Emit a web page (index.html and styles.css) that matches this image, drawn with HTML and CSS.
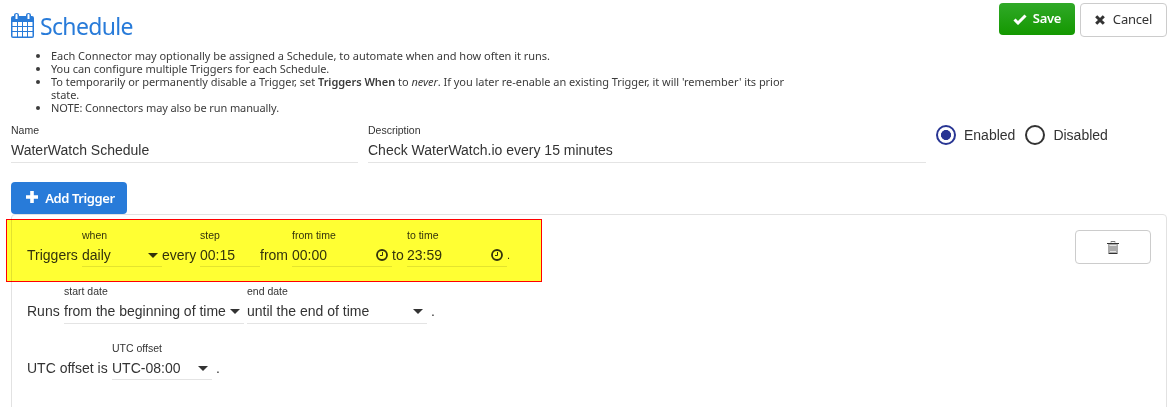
FILE: index.html
```html
<!DOCTYPE html>
<html lang="en">
<head>
<meta charset="utf-8">
<title>Schedule</title>
<link rel="stylesheet" href="styles.css">
</head>
<body>
<header class="header">
  <h1 class="title">
    <svg class="calendar" viewBox="0 0 23 25" width="23" height="25"><path fill="#287bd9" fill-rule="evenodd" d="M2 3H3V2Q3 0 5.500 0T8 2V3H15V2Q15 0 17.500 0T20 2V3H21Q23 3 23 5V23Q23 25 21 25H2Q0 25 0 23V5Q0 3 2 3ZM4.500 2V6H6.500V2Q6.500 1 5.500 1T4.500 2ZM16.500 2V6H18.500V2Q18.500 1 17.500 1T16.500 2ZM1.500 9V13H6V9ZM7 9V13H11V9ZM12 9V13H16V9ZM17 9V13H21.500V9ZM1.500 14V18H6V14ZM7 14V18H11V14ZM12 14V18H16V14ZM17 14V18H21.500V14ZM1.500 19V23.500H6V19ZM7 19V23.500H11V19ZM12 19V23.500H16V19ZM17 19V23.500H21.500V19Z"/></svg>
    <span class="title-text">Schedule</span>
  </h1>
  <div class="actions">
    <button class="btn save"><svg width="14" height="11" viewBox="0 0 14 11"><path d="M1.500 5.500 5 9 12.500 1.500" fill="none" stroke="#fff" stroke-width="3"/></svg><span>Save</span></button>
    <button class="btn cancel"><svg width="10" height="10" viewBox="0 0 10 10"><path d="M1.200 1.200 8.800 8.800M8.800 1.200 1.200 8.800" stroke="#333" stroke-width="3"/></svg><span>Cancel</span></button>
  </div>
</header>
<ul class="help">
  <li><span class="l1">Each Connector may optionally be assigned a Schedule, to automate when and how often it runs.</span></li>
  <li><span class="l2">You can configure multiple Triggers for each Schedule.</span></li>
  <li><span class="l3">To temporarily or permanently disable a Trigger, set <b>Triggers When</b> to <i>never</i>. If you later re-enable an existing Trigger, it will 'remember' its prior<br>state.</span></li>
  <li><span class="l4">NOTE: Connectors may also be run manually.</span></li>
</ul>
<section class="details">
  <label class="field name"><small>Name</small><span class="value">WaterWatch Schedule</span></label>
  <label class="field description"><small>Description</small><span class="value">Check WaterWatch.io every 15 minutes</span></label>
  <div class="radios">
    <span class="radio on"></span><span class="enabled">Enabled</span>
    <span class="radio"></span><span>Disabled</span>
  </div>
</section>
<button class="btn add"><svg width="12" height="12" viewBox="0 0 12 12"><path d="M6 0V12M0 6H12" stroke="#fff" stroke-width="3.600"/></svg><span>Add Trigger</span></button>
<section class="panel">
  <div class="highlight"></div>
  <div class="rows">
    <div class="row">
      <span class="word triggers">Triggers</span>
      <label class="field w80"><small>when</small><span class="value">daily<i class="caret"></i></span></label>
      <span class="word every">every</span>
      <label class="field w60"><small>step</small><span class="value">00:15</span></label>
      <span class="word from">from</span>
      <label class="field w100"><small>from time</small><span class="value">00:00<svg class="clock" width="12" height="12" viewBox="0 0 12 12"><circle cx="6" cy="6" r="5" fill="none" stroke="#333" stroke-width="1.800"/><path d="M6.500 3V6.500H4" fill="none" stroke="#333"/></svg></span></label>
      <span class="word to">to</span>
      <label class="field w100"><small>to time</small><span class="value">23:59<svg class="clock" width="12" height="12" viewBox="0 0 12 12"><circle cx="6" cy="6" r="5" fill="none" stroke="#333" stroke-width="1.800"/><path d="M6.500 3V6.500H4" fill="none" stroke="#333"/></svg></span></label>
      <span class="word dot1">.</span>
    </div>
    <div class="row row-runs">
      <span class="word runs">Runs</span>
      <label class="field w180"><small>start date</small><span class="value">from the beginning of time<i class="caret"></i></span></label>
      <label class="field w180 end"><small>end date</small><span class="value">until the end of time<i class="caret"></i></span></label>
      <span class="word dot2">.</span>
    </div>
    <div class="row row-utc">
      <span class="word utc">UTC offset is</span>
      <label class="field w100"><small>UTC offset</small><span class="value">UTC-08:00<i class="caret"></i></span></label>
      <span class="word dot2">.</span>
    </div>
  </div>
  <button class="btn trash"><svg width="12" height="13" viewBox="0 0 12 13"><path d="M1 3H11V12H1Z" fill="#aaa"/><path d="M4 1.500V.5H8V1.500" fill="none" stroke="#777"/><path d="M0 2.500H12M1.500 12.500H10.500" stroke="#333"/><path d="M2.500 4.500H9.500M3 10.500H9" stroke="#e4e4e4"/></svg></button>
</section>
</body>
</html>
```
FILE: styles.css
```css
* { box-sizing: border-box; }
body {
  margin: 0;
  height: 407px;
  overflow: hidden;
  background: #fff;
  color: #333;
  font: 14px/18px "Liberation Sans", Arial, sans-serif;
}
.header { display: flex; justify-content: space-between; height: 49px; padding: 3px 7px 0 11px; }
.title { display: flex; gap: 6px; margin: 0; padding-top: 10px; color: #287bd9; font: 400 23px/26px "Noto Sans", sans-serif; }
.title-text { letter-spacing: -.65px; }
.actions { display: flex; gap: 5px; align-items: flex-start; }
.btn { display: flex; align-items: center; justify-content: center; margin: 0; padding: 0; border: 0; border-radius: 4px; }
.save { width: 76px; height: 32px; gap: 6px; color: #fff; background: linear-gradient(#30a928, #149800); font: 600 13px/18px "Noto Sans", sans-serif; letter-spacing: -.3px; }
.save span, .cancel span { position: relative; top: -1px; }
.cancel { width: 87px; height: 34px; gap: 8px; color: #333; background: #fff; border: 1px solid #ccc; font: 13px/18px "Noto Sans", sans-serif; letter-spacing: -.2px; }
.help { height: 75px; margin: 0; padding: 0 0 0 51px; color: #3b3b3b; font: 11px/13px "Noto Sans", sans-serif; white-space: nowrap; }
.l1 { letter-spacing: -.02px; }
.l2 { letter-spacing: -.055px; }
.l3 { letter-spacing: -.045px; }
.l3 b { font-weight: 600; }
.l4 { letter-spacing: -.1px; }
.details { display: flex; height: 58px; padding-left: 11px; }
.field { display: flex; flex-direction: column; border-bottom: 1px solid #e4e4e4; height: 39px; white-space: nowrap; }
.field small { font-size: 10.5px; line-height: 12px; height: 17px; }
.value { display: flex; align-items: center; justify-content: space-between; line-height: 18px; }
.name { width: 347px; margin-right: 10px; }
.description { width: 558px; }
.radios { display: flex; align-items: center; gap: 8px; height: 22px; margin-left: 10px; }
.radio { width: 20px; height: 20px; border: 2px solid #333; border-radius: 50%; }
.on { border-color: #283593; background: radial-gradient(circle, #283593 0 4.7px, transparent 5.3px); }
.enabled { margin-right: 2px; }
.add { width: 116px; height: 32px; margin-left: 11px; padding-left: 3px; gap: 7px; color: #fff; background: #287bd9; font: 600 13px/18px "Noto Sans", sans-serif; letter-spacing: -.4px; }
.add svg { position: relative; top: -1px; }
.panel { position: relative; display: flex; justify-content: space-between; margin: 0 7px 0 11px; height: 210px; padding: 15px 15px 0; border: 1px solid #e2e2e2; border-radius: 4px; }
.highlight { position: absolute; left: -6px; top: 4px; width: 536px; height: 63px; border: 1px solid #f00; background: #ff3; mix-blend-mode: multiply; pointer-events: none; }
.row { display: flex; height: 37px; }
.row .field { height: 37px; }
.row .field small { height: 16px; line-height: 10px; }
.row-runs { margin-top: 19px; height: 38px; }
.row-runs .field { height: 38px; }
.row-utc { margin-top: 19px; }
.word { padding-top: 16px; white-space: nowrap; }
.triggers { width: 55px; }
.every { width: 38px; }
.from { width: 32px; }
.to { width: 15px; }
.runs { width: 37px; }
.utc { width: 85px; }
.w60 { width: 60px; }
.w80 { width: 80px; }
.w100 { width: 100px; }
.w180 { width: 180px; }
.end { margin-left: 3px; }
.dot1 { font-size: 11px; }
.dot2 { margin-left: 4px; }
.caret { margin-right: 4px; border: 5px solid transparent; border-top-color: #333; border-bottom: 0; }
.clock { margin-right: 4px; }
.trash { width: 76px; height: 34px; background: #fff; border: 1px solid #ccc; }
```
